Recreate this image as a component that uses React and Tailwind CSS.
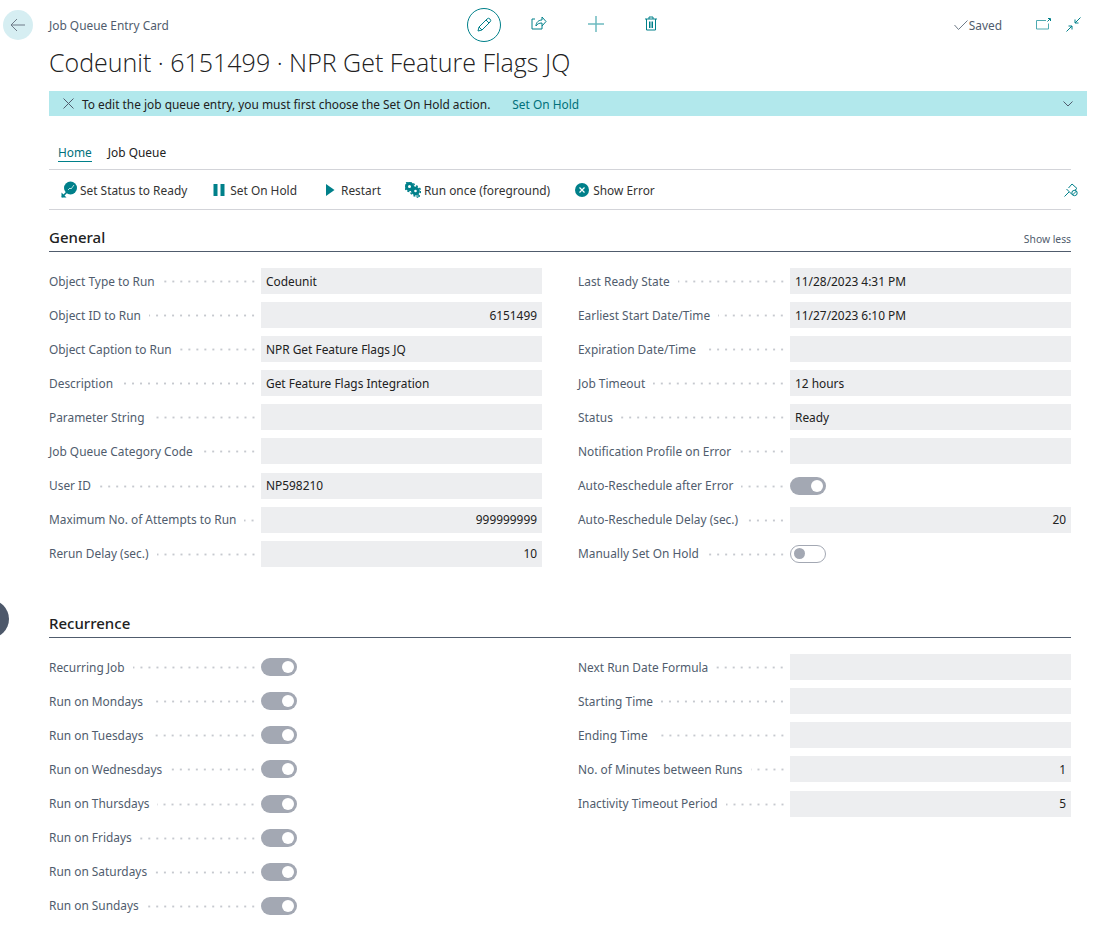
const generalLeft = [
  { label: 'Object Type to Run', value: 'Codeunit' },
  { label: 'Object ID to Run', value: '6151499', right: true },
  { label: 'Object Caption to Run', value: 'NPR Get Feature Flags JQ' },
  { label: 'Description', value: 'Get Feature Flags Integration' },
  { label: 'Parameter String', value: '' },
  { label: 'Job Queue Category Code', value: '' },
  { label: 'User ID', value: 'NP598210' },
  { label: 'Maximum No. of Attempts to Run', value: '999999999', right: true },
  { label: 'Rerun Delay (sec.)', value: '10', right: true },
];

const generalRight = [
  { label: 'Last Ready State', value: '11/28/2023 4:31 PM' },
  { label: 'Earliest Start Date/Time', value: '11/27/2023 6:10 PM' },
  { label: 'Expiration Date/Time', value: '' },
  { label: 'Job Timeout', value: '12 hours' },
  { label: 'Status', value: 'Ready' },
  { label: 'Notification Profile on Error', value: '' },
  { label: 'Auto-Reschedule after Error', toggle: true, on: true },
  { label: 'Auto-Reschedule Delay (sec.)', value: '20', right: true },
  { label: 'Manually Set On Hold', toggle: true, on: false },
];

const recurrenceLeft = [
  'Recurring Job',
  'Run on Mondays',
  'Run on Tuesdays',
  'Run on Wednesdays',
  'Run on Thursdays',
  'Run on Fridays',
  'Run on Saturdays',
  'Run on Sundays',
].map((label) => ({ label, toggle: true, on: true }));

const recurrenceRight = [
  { label: 'Next Run Date Formula', value: '' },
  { label: 'Starting Time', value: '' },
  { label: 'Ending Time', value: '' },
  { label: 'No. of Minutes between Runs', value: '1', right: true },
  { label: 'Inactivity Timeout Period', value: '5', right: true },
];

const Toggle = ({ on }) =>
  on ? (
    <div className="w-9 h-[18px] rounded-full bg-[#a3a8b3] flex items-center justify-end pr-[3px]">
      <div className="w-3 h-3 rounded-full bg-white" />
    </div>
  ) : (
    <div className="w-9 h-[18px] rounded-full bg-white border border-[#a3a8b3] flex items-center pl-[3px]">
      <div className="w-[11px] h-[11px] rounded-full bg-[#a3a8b3]" />
    </div>
  );

const Field = ({ item }) => (
  <div className="flex items-center h-[26px]">
    <div className="w-[208px] flex items-center shrink-0 pt-px">
      <span className="whitespace-nowrap text-[#505c6d]">{item.label}</span>
      <span className="flex-1 ml-2 h-[3px] bg-[radial-gradient(circle,#c6c9cf_1px,transparent_1.2px)] bg-[length:8px_3px] bg-right" />
    </div>
    <div className="w-[4px] shrink-0" />
    {item.toggle ? (
      <Toggle on={item.on} />
    ) : (
      <div
        className={`w-[281px] h-[26px] bg-[#edeef0] pt-px px-[5px] flex items-center text-[#212121] ${
          item.right ? 'justify-end' : ''
        }`}
      >
        {item.value}
      </div>
    )}
  </div>
);

const Column = ({ items }) => (
  <div className="flex flex-col gap-y-[8.100px]">
    {items.map((item) => (
      <Field key={item.label} item={item} />
    ))}
  </div>
);

const ActionButton = ({ icon, label, className }) => (
  <div className={`flex items-center ${className}`}>
    {icon}
    <span className="text-[#333] whitespace-nowrap pt-[2px]">{label}</span>
  </div>
);

const App = () => {
  return (
    <div
      className="relative w-[1120px] h-[945px] overflow-hidden bg-white text-[11.900px] leading-none"
      style={{ fontFamily: '"Noto Sans", sans-serif' }}
    >
      {/* left edge bubble */}
      <div className="absolute left-[-29px] top-[600px] w-[38px] h-[38px] rounded-full bg-[#4d586a]" />

      {/* Top bar */}
      <div className="flex items-center h-[34px] mt-[8px] pl-[3px] pr-[39px]">
        <div className="w-[30px] h-[30px] rounded-full bg-[#d6eef2] flex items-center justify-center">
          <svg width="16" height="14" viewBox="0 0 16 14" fill="none" stroke="#6f7b88" strokeWidth="1">
            <path d="M15 7H1M7 1 1 7l6 6" />
          </svg>
        </div>
        <div className="ml-[16px] w-[418px] pt-[2px] text-[#505c6d]">Job Queue Entry Card</div>
        <div className="w-[34px] h-[34px] rounded-full border border-[#00808a] flex items-center justify-center">
          <svg width="16" height="16" viewBox="0 0 16 16" fill="none" stroke="#00808a" strokeWidth="1">
            <path d="M2 14l1-4 8-8a1.600 1.600 0 0 1 3 3l-8 8-4 1zM3 10l3 3M10 3l3 3" />
          </svg>
        </div>
        <svg className="ml-[30px] mb-[3px]" width="16" height="15" viewBox="0 0 16 15" fill="none" stroke="#00808a" strokeWidth="1">
          <path d="M4 3H1v10h10v-3M5 10c0-4 3-6 6-6V1l4 4.500L11 10V7c-3 0-5 1-6 3z" />
        </svg>
        <svg className="ml-[41px] mb-[2px]" width="16" height="16" viewBox="0 0 16 16" fill="none" stroke="#6dbac0" strokeWidth="1.500">
          <path d="M8 0v16M0 8h16" />
        </svg>
        <svg className="ml-[41px] mb-[3px]" width="12" height="15" viewBox="0 0 12 15" fill="none" stroke="#00808a" strokeWidth="1">
          <path d="M0 3h12M4 3V1h4v2M1.500 3v11h9V3M4.500 5.500v6.500M6 5.500v6.500M7.500 5.500v6.500" />
        </svg>
        <div className="ml-auto flex items-center text-[#505c6d]">
          <svg width="14" height="10" viewBox="0 0 14 10" fill="none" stroke="#6f7b88" strokeWidth="1">
            <path d="M.5 5l4 4.500L13.500.500" />
          </svg>
          <span className="ml-[1px] pt-[2px]">Saved</span>
        </div>
        <svg className="ml-[34px] mb-[2px]" width="15" height="12" viewBox="0 0 15 12" fill="none" stroke="#4eaab1" strokeWidth="1">
          <path d="M10 2.500H.5v8.500h12V5.500" />
          <path d="M11.500 3.500 14 1M12 .5h2.500V3" stroke="#00808a" />
        </svg>
        <svg className="ml-[15px] mb-[2px]" width="15" height="15" viewBox="0 0 15 15" fill="none" stroke="#00808a" strokeWidth="1">
          <path d="M14.500.500 9 6M9 2.500V6h3.500M.500 14.500 6 9M6 12.500V9H2.500" />
        </svg>
      </div>

      {/* Title */}
      <div
        className="pl-[49px] mt-[2px] text-[25px] leading-[36px] font-light text-[#212121]"
        style={{ fontFamily: '"Open Sans", sans-serif' }}
      >
        Codeunit · 6151499 · NPR Get Feature Flags JQ
      </div>

      {/* Banner */}
      <div className="ml-[49px] w-[1038px] h-[25px] mt-[11px] bg-[#b2e8ec] flex items-center pl-[14px] pr-[14px]">
        <svg width="11" height="11" viewBox="0 0 11 11" fill="none" stroke="#505c6d" strokeWidth="1">
          <path d="M.5.500l10 10M10.500.500l-10 10" />
        </svg>
        <span className="ml-[8px] pt-[2px] text-[#212121]">To edit the job queue entry, you must first choose the Set On Hold action.</span>
        <span className="ml-[22px] pt-[2px] text-[#00707a]">Set On Hold</span>
        <svg className="ml-auto" width="10" height="6" viewBox="0 0 10 6" fill="none" stroke="#505c6d" strokeWidth="1">
          <path d="M.5.500 5 5 9.500.500" />
        </svg>
      </div>

      {/* Tabs */}
      <div className="ml-[49px] mr-[49px] mt-[21px] h-[33px] flex gap-[16px] pl-[9px] border-b border-[#d3d4d9] text-[#212121]">
        <div className="h-[15px] mt-[10px] border-b border-[#00808a] text-[#00707a]">Home</div>
        <div className="mt-[10px]">Job Queue</div>
      </div>

      {/* Action bar */}
      <div className="ml-[49px] mr-[49px] h-[40px] flex items-center border-b border-[#d3d4d9]">
        <ActionButton
          className="ml-[12px] gap-[3px]"
          label="Set Status to Ready"
          icon={
            <svg width="16" height="17" viewBox="0 0 16 17">
              <circle cx="9.500" cy="7" r="6.500" fill="#00808a" />
              <path d="M7 9l2-2 1 1 3-4" stroke="#b2e0e3" strokeWidth="1" fill="none" />
              <path d="M1 16l5-5" stroke="#00808a" strokeWidth="1.600" fill="none" />
              <path d="M.5 11.500V16.500H5.500z" fill="#00808a" />
            </svg>
          }
        />
        <ActionButton
          className="ml-[26px] gap-[5px]"
          label="Set On Hold"
          icon={
            <svg width="12" height="12" viewBox="0 0 12 12" fill="#00808a">
              <rect x="0.500" width="4" height="12" />
              <rect x="7.500" width="4" height="12" />
            </svg>
          }
        />
        <ActionButton
          className="ml-[28px] gap-[6px]"
          label="Restart"
          icon={
            <svg width="10" height="12" viewBox="0 0 10 12" fill="#00808a">
              <path d="M1 0l8.500 6L1 12z" />
            </svg>
          }
        />
        <ActionButton
          className="ml-[24px] gap-[3px]"
          label="Run once (foreground)"
          icon={
            <svg width="16" height="16" viewBox="0 0 16 16" fill="none" stroke="#00808a">
              <circle cx="4.500" cy="4.500" r="3" strokeWidth="3" />
              <circle cx="4.500" cy="4.500" r="5" strokeWidth="1.500" strokeDasharray="2 1.900" />
              <circle cx="10.500" cy="9" r="2.800" strokeWidth="3" />
              <circle cx="10.500" cy="9" r="5" strokeWidth="1.500" strokeDasharray="2 1.900" />
              <path d="M12 12.500v3l3-1.500z" fill="#fff" strokeWidth="1" />
            </svg>
          }
        />
        <ActionButton
          className="ml-[25px] gap-[4px]"
          label="Show Error"
          icon={
            <svg width="14" height="14" viewBox="0 0 14 14">
              <circle cx="7" cy="7" r="7" fill="#00808a" />
              <path d="M4.500 4.500l5 5M9.500 4.500l-5 5" stroke="#fff" strokeWidth="1.200" />
            </svg>
          }
        />
        <svg className="ml-auto mr-[-7px]" width="14" height="14" viewBox="0 0 14 14" fill="none" stroke="#00808a" strokeWidth="1">
          <path d="M.5 13.500 5 9M2.500 6l5.500 5.500M4.500 5 8 1l5 4.500-2.500 2" />
          <circle cx="10.500" cy="10" r="2.700" />
          <path d="M8.500 12l4-4" />
        </svg>
      </div>

      {/* General */}
      <div className="ml-[49px] mr-[49px] mt-[16px] h-[26px] flex items-end justify-between border-b border-[#505c6d] pb-[6px]">
        <span className="text-[15px] font-medium text-[#212121]">General</span>
        <span className="text-[10.300px] text-[#505c6d] mb-[1px]">Show less</span>
      </div>
      <div className="ml-[49px] mt-[16px] w-[1022px] grid grid-cols-[493px_493px] gap-x-[36px]">
        <Column items={generalLeft} />
        <Column items={generalRight} />
      </div>

      {/* Recurrence */}
      <div className="ml-[49px] mr-[49px] mt-[45.400px] h-[26px] flex items-end border-b border-[#505c6d] pb-[6px]">
        <span className="text-[15px] font-medium text-[#212121]">Recurrence</span>
      </div>
      <div className="ml-[49px] mt-[16px] w-[1022px] grid grid-cols-[493px_493px] gap-x-[36px]">
        <Column items={recurrenceLeft} />
        <Column items={recurrenceRight} />
      </div>
    </div>
  );
};

export default App;
